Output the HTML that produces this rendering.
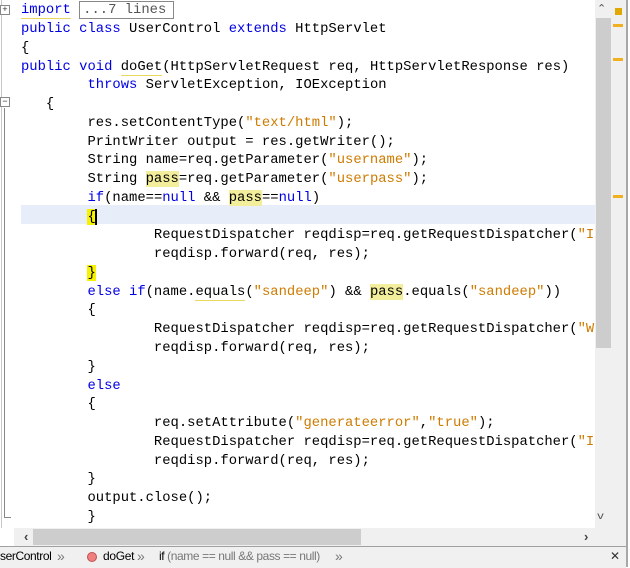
<!DOCTYPE html>
<html><head><style>
body{margin:0;width:630px;height:567px;overflow:hidden;background:#fff;position:relative;font-family:"Liberation Sans",sans-serif}
.code{position:absolute;left:0;top:0;width:595px;height:528px;background:#fff;overflow:hidden}
.ln{position:absolute;left:21px;height:19px;line-height:19px;font-family:"Liberation Mono",monospace;font-size:13.85px;white-space:pre;color:#000}
.k{color:#0000e6}.s{color:#ce7b00}
.hl{background:#f3ee9c}.br{background:#f6f200}
.sq{border-bottom:1px solid #e8d860}
.fold{position:absolute;width:8px;height:8px;border:1px solid #888;background:#fff;font-size:9px;line-height:8px;text-align:center;color:#333;font-family:"Liberation Mono",monospace}
</style></head><body>
<div class="code">
<div style="position:absolute;left:21px;top:205px;width:574px;height:19px;background:#e8eef9"></div>
<div style="position:absolute;left:1px;top:0;width:1px;height:528px;background:#c8c8c8"></div>
<div class="fold" style="left:0;top:5px">+</div>
<div class="fold" style="left:0;top:97px">−</div>
<div style="position:absolute;left:4px;top:108px;width:1px;height:410px;background:#888"></div>
<div style="position:absolute;left:4px;top:517px;width:7px;height:1px;background:#888"></div>
<div class="ln" style="top:1px"><span class="k sq">import</span> <span style="border:1px solid #888;padding:0 7px 0 3px;color:#555">...7 lines</span></div>
<div class="ln" style="top:20px"><span class="k">public class</span> UserControl <span class="k">extends</span> HttpServlet</div>
<div class="ln" style="top:39px">{</div>
<div class="ln" style="top:58px"><span class="k">public void</span> <span class="sq">doGet</span>(HttpServletRequest req, HttpServletResponse res)</div>
<div class="ln" style="top:76px">        <span class="k">throws</span> ServletException, IOException</div>
<div class="ln" style="top:95px">   {</div>
<div class="ln" style="top:114px">        res.setContentType(<span class="s">"text/html"</span>);</div>
<div class="ln" style="top:133px">        PrintWriter output = res.getWriter();</div>
<div class="ln" style="top:151px">        String name=req.getParameter(<span class="s">"username"</span>);</div>
<div class="ln" style="top:170px">        String <span class="hl">pass</span>=req.getParameter(<span class="s">"userpass"</span>);</div>
<div class="ln" style="top:189px">        <span class="k">if</span>(name==<span class="k">null</span> &amp;&amp; <span class="hl">pass</span>==<span class="k">null</span>)</div>
<div class="ln" style="top:208px">        <span class="br">{</span><span style="border-left:2px solid #000;margin-left:-1px"></span></div>
<div class="ln" style="top:226px">                RequestDispatcher reqdisp=req.getRequestDispatcher(<span class="s">"I</span></div>
<div class="ln" style="top:245px">                reqdisp.forward(req, res);</div>
<div class="ln" style="top:264px">        <span class="br">}</span></div>
<div class="ln" style="top:283px">        <span class="k">else if</span>(name.<span class="sq">equals</span>(<span class="s">"sandeep"</span>) &amp;&amp; <span class="hl">pass</span>.equals(<span class="s">"sandeep"</span>))</div>
<div class="ln" style="top:301px">        {</div>
<div class="ln" style="top:320px">                RequestDispatcher reqdisp=req.getRequestDispatcher(<span class="s">"W</span></div>
<div class="ln" style="top:339px">                reqdisp.forward(req, res);</div>
<div class="ln" style="top:358px">        }</div>
<div class="ln" style="top:377px">        <span class="k">else</span></div>
<div class="ln" style="top:395px">        {</div>
<div class="ln" style="top:414px">                req.setAttribute(<span class="s">"generateerror"</span>,<span class="s">"true"</span>);</div>
<div class="ln" style="top:433px">                RequestDispatcher reqdisp=req.getRequestDispatcher(<span class="s">"I</span></div>
<div class="ln" style="top:452px">                reqdisp.forward(req, res);</div>
<div class="ln" style="top:470px">        }</div>
<div class="ln" style="top:489px">        output.close();</div>
<div class="ln" style="top:508px">        }</div>
</div>
<!-- vertical scrollbar -->
<div style="position:absolute;left:595px;top:0;width:17px;height:528px;background:#f0f0f0"></div>
<div style="position:absolute;left:596px;top:18px;width:15px;height:330px;background:#cdcdcd"></div>
<div style="position:absolute;left:597px;top:2px;font-size:11px;color:#555">&#8963;</div>
<div style="position:absolute;left:598px;top:511px;font-size:10px;color:#555;transform:scaleX(1.3)">v</div>
<!-- error stripe -->
<div style="position:absolute;left:612px;top:0;width:14px;height:546px;background:#f0f0f0"></div>
<div style="position:absolute;left:615px;top:8px;width:7px;height:7px;background:#e0a800"></div>
<div style="position:absolute;left:613px;top:24px;width:10px;height:3px;background:#f0b020"></div>
<div style="position:absolute;left:613px;top:58px;width:10px;height:3px;background:#f0b020"></div>
<div style="position:absolute;left:613px;top:195px;width:10px;height:3px;background:#f0b020"></div>
<div style="position:absolute;left:626px;top:0;width:2px;height:567px;background:#a8a8a8"></div>
<!-- horizontal scrollbar -->
<div style="position:absolute;left:14px;top:528px;width:598px;height:18px;background:#f0f0f0"></div>
<div style="position:absolute;left:33px;top:529px;width:328px;height:16px;background:#cdcdcd"></div>
<div style="position:absolute;left:24px;top:529px;font-size:13px;font-weight:bold;color:#444">‹</div>
<div style="position:absolute;left:584px;top:529px;font-size:13px;font-weight:bold;color:#444">›</div>
<!-- status bar -->
<div style="position:absolute;left:0;top:546px;width:626px;height:21px;background:#f0f0f0;border-top:1px solid #a0a0a0;font-size:12px;line-height:19px;color:#000">
<span style="position:absolute;left:0;top:0;letter-spacing:-0.4px">serControl</span>
<span style="position:absolute;left:57px;top:0;color:#777;font-size:14px">»</span>
<span style="position:absolute;left:87px;top:5px;width:10px;height:10px;border-radius:50%;background:#f08080;border:1px solid #c05050;box-sizing:border-box"></span>
<span style="position:absolute;left:103px;top:0;letter-spacing:-0.3px">doGet</span>
<span style="position:absolute;left:137px;top:0;color:#777;font-size:14px">»</span>
<span style="position:absolute;left:159px;top:0;letter-spacing:-0.4px">if <span style="color:#777">(name == null &amp;&amp; pass == null)</span></span>
<span style="position:absolute;left:335px;top:0;color:#777;font-size:14px">»</span>
<span style="position:absolute;left:610px;top:0;color:#333">✕</span>
</div>
</body></html>
